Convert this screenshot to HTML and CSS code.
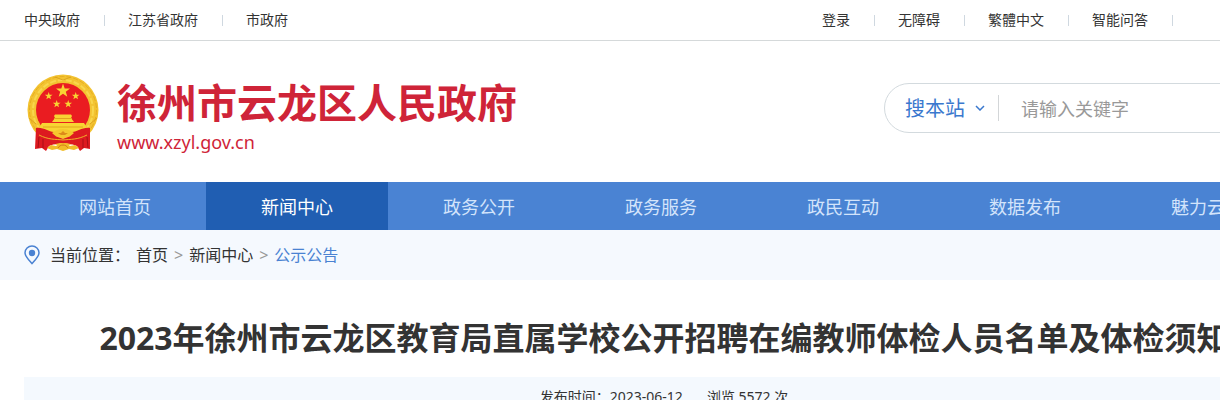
FILE: index.html
```html
<!DOCTYPE html>
<html lang="zh-CN">
<head>
  <meta charset="UTF-8" />
  <meta name="viewport" content="width=device-width, initial-scale=1" />
  <title>徐州市云龙区人民政府</title>
  <link rel="stylesheet" href="styles.css">
</head>
<body>
  <!-- Top links -->
  <div class="topbar">
    <div class="container topbar-inner">
      <ul class="top-links">
        <li><a href="#">中央政府</a></li>
        <li><a href="#">江苏省政府</a></li>
        <li><a href="#">市政府</a></li>
      </ul>
      <ul class="top-links top-tools">
        <li><a href="#">登录</a></li>
        <li><a href="#">无障碍</a></li>
        <li><a href="#">繁體中文</a></li>
        <li><a href="#">智能问答</a></li>
      </ul>
    </div>
  </div>

  <!-- Logo and search -->
  <header class="container header">
    <a class="logo" href="#">
      <svg class="emblem" viewBox="0 0 72 78" aria-hidden="true">
        <circle cx="36" cy="36" r="35.5" fill="#f3c331"/>
        <circle cx="36" cy="36" r="33.500" fill="none" stroke="#e6ae22" stroke-width="1" stroke-dasharray="5 2"/>
        <circle cx="36" cy="36" r="30" fill="none" stroke="#f9d64c" stroke-width="2" stroke-dasharray="6 2"/>
        <path d="M28 3 L36 6 L44 3 M2 44 L9 50 M70 44 L63 50" fill="none" stroke="#dda31f" stroke-width="1"/>
        <circle cx="36" cy="36" r="27" fill="#ea1c21"/>
        <g fill="#f8d433">
          <path id="star" d="M36 9.500 L37.700 14.500 L43 14.500 L38.800 17.700 L40.300 22.700 L36 19.700 L31.700 22.700 L33.200 17.700 L29 14.500 L34.300 14.500 Z"/>
          <use href="#star" transform="translate(3 20) scale(.55) translate(-2 -13)"/>
          <use href="#star" transform="translate(30 20) scale(.55) translate(-2 -13)"/>
          <use href="#star" transform="translate(11 28) scale(.55) translate(-2 -13)"/>
          <use href="#star" transform="translate(22.500 28) scale(.55) translate(-2 -13)"/>
          <path d="M27 42 L28 40.500 L44 40.500 L45 42 L44 44 L47 48 L25 48 L28 44 Z"/>
          <path d="M15 49 L57 49 L60 54 L54 60 L18 60 L12 54 Z"/>
        </g>
        <path d="M16 53 H56 M27 44.500 H45" stroke="#e2a41f" stroke-width="1"/>
        <path d="M9 54 C17 53 21 58 27 58 L30 63 L42 63 L45 58 C51 58 55 53 63 54 L63 75 L57 74 L53 77 L50 72 C46 71 43 69 36 69 C29 69 26 71 22 72 L19 77 L15 74 L8 75 Z" fill="#dd1a20"/>
        <path d="M25 59 C28 57 31 55 36 55 C41 55 44 57 47 59 C43 63 41 63 36 65 C31 63 29 63 25 59 Z" fill="#f6c72e"/>
        <path d="M31 59 H34 L36 57 L38 59 H41 L38 61 H34 Z" fill="#dc8b19"/>
        <path d="M12 61 C22 66 28 65 36 66 C44 65 50 66 60 61" fill="none" stroke="#f0b127" stroke-width="1"/>
        <path d="M20 74 L24 71 L29 72 L33 69 L36 70 L39 69 L43 72 L48 71 L52 74 L47 76 L42 75 L36 77 L30 75 L25 76 Z" fill="#f1bd29"/>
        <path d="M31 74 C33 70 39 70 41 74" fill="none" stroke="#d47b18" stroke-width="1"/>
        <path d="M12 63 L11 74 M16 65 L16 74 M60 63 L61 74 M56 65 L56 74" stroke="#a90f16" stroke-width="1"/>
      </svg>
      <span class="logo-text">
        <strong>徐州市云龙区人民政府</strong>
        <span>www.xzyl.gov.cn</span>
      </span>
    </a>
    <form class="search">
      <div class="search-type">
        <select aria-label="搜索范围">
          <option>搜本站</option>
        </select>
        <svg viewBox="0 0 10 6" aria-hidden="true"><path d="M1 1 L5 5 L9 1"/></svg>
      </div>
      <input type="text" aria-label="关键字" placeholder="请输入关键字" />
    </form>
  </header>

  <!-- Main nav -->
  <nav class="nav">
    <ul class="container nav-list">
      <li><a href="#">网站首页</a></li>
      <li><a class="active" href="#">新闻中心</a></li>
      <li><a href="#">政务公开</a></li>
      <li><a href="#">政务服务</a></li>
      <li><a href="#">政民互动</a></li>
      <li><a href="#">数据发布</a></li>
      <li><a href="#">魅力云龙</a></li>
    </ul>
  </nav>

  <!-- Breadcrumb -->
  <div class="position">
    <div class="container position-inner">
      <svg class="pin" viewBox="0 0 16 20" aria-hidden="true">
        <path d="M8 18.500 C5 15 1 11.500 1 7.800 A7 6.800 0 0 1 15 7.800 C15 11.500 11 15 8 18.500 Z" fill="none" stroke="#4a82d2" stroke-width="1.500"/>
        <circle cx="8" cy="8" r="3.200" fill="#4a82d2"/>
      </svg>
      <span>当前位置：</span>
      <a href="#">首页</a>
      <span class="arrow">&gt;</span>
      <a href="#">新闻中心</a>
      <span class="arrow">&gt;</span>
      <a class="current" href="#">公示公告</a>
    </div>
  </div>

  <!-- Article -->
  <main class="container article">
    <h1>2023年徐州市云龙区教育局直属学校公开招聘在编教师体检人员名单及体检须知</h1>
    <div class="info">
      <span>发布时间：2023-06-12</span>
      <span>浏览 5572 次</span>
    </div>
  </main>
</body>
</html>
```
FILE: styles.css
```css
* {
  box-sizing: border-box;
}

body {
  margin: 0;
  min-width: 1328px;
  background: #fff;
  color: #333;
  font-family: "Noto Sans", "Noto Sans CJK SC", sans-serif;
  font-size: 14px;
}

a {
  color: inherit;
  text-decoration: none;
}

ul {
  margin: 0;
  padding: 0;
  list-style: none;
}

.container {
  max-width: 1448px;
  margin: 0 auto;
  padding: 0 24px;
}

/* top links */
.topbar {
  border-bottom: 1px solid #d5d9da;
}

.topbar-inner {
  display: flex;
  justify-content: space-between;
}

.top-links {
  display: flex;
  line-height: 40px;
}

.top-links li {
  display: flex;
  align-items: center;
}

.top-links li::after {
  content: "";
  width: 1px;
  height: 11px;
  margin: 0 23px 0 24px;
  background: #cfd8e0;
}

.top-links:not(.top-tools) li:last-child::after {
  display: none;
}

.top-tools {
  padding-right: 108px;
}

/* header */
.header {
  display: flex;
  justify-content: space-between;
  align-items: center;
  height: 141px;
}

.logo {
  display: flex;
  align-items: center;
  gap: 18px;
  padding: 2px 0 0 3px;
  color: #cf2438;
}

.emblem {
  width: 72px;
  height: 78px;
}

.logo-text {
  display: flex;
  flex-direction: column;
  padding-top: 6px;
}

.logo-text strong {
  font-size: 40px;
  line-height: 52px;
}

.logo-text span {
  font-size: 18px;
  line-height: 26px;
}

.search {
  display: flex;
  align-items: center;
  width: 420px;
  height: 50px;
  margin-bottom: 8px;
  padding: 0 20px;
  border: 1px solid #d3dade;
  border-radius: 25px;
}

.search-type {
  display: flex;
  align-items: center;
  gap: 10px;
  height: 26px;
  padding-right: 13px;
  border-right: 1px solid #d3d6d8;
  color: #3a78ce;
}

.search-type select {
  padding: 2px 0 0;
  border: none;
  appearance: none;
  background: none;
  color: inherit;
  font-family: inherit;
  font-size: 20px;
}

.search-type svg {
  width: 10px;
  height: 6px;
  fill: none;
  stroke: #3a78ce;
  stroke-width: 1.5;
}

.search input {
  flex: 1;
  min-width: 0;
  padding: 2px 0 0 22px;
  border: none;
  outline: none;
  background: none;
  font-family: inherit;
  font-size: 18px;
}

.search input::placeholder {
  color: #999;
}

/* nav */
.nav {
  background: #4a83d3;
}

.nav-list {
  display: flex;
}

.nav-list li {
  width: 182px;
}

.nav-list a {
  display: block;
  padding-top: 2px;
  color: #d3e4fb;
  font-size: 18px;
  line-height: 46px;
  text-align: center;
}

.nav-list a.active {
  background: #205eb2;
  color: #fff;
}

/* breadcrumb */
.position {
  background: #f5f9fe;
}

.position-inner {
  display: flex;
  align-items: center;
  gap: 6px;
  font-size: 16px;
  line-height: 50px;
}

.pin {
  width: 16px;
  height: 20px;
  margin-right: 4px;
}

.arrow {
  color: #999;
}

.position .current {
  color: #4a82d2;
}

/* article */
.article h1 {
  margin: 34px 0 15px;
  font-size: 32px;
  line-height: 48px;
  text-align: center;
}

.info {
  display: flex;
  justify-content: center;
  gap: 24px;
  background: #f4f9fe;
  line-height: 40px;
}
```
